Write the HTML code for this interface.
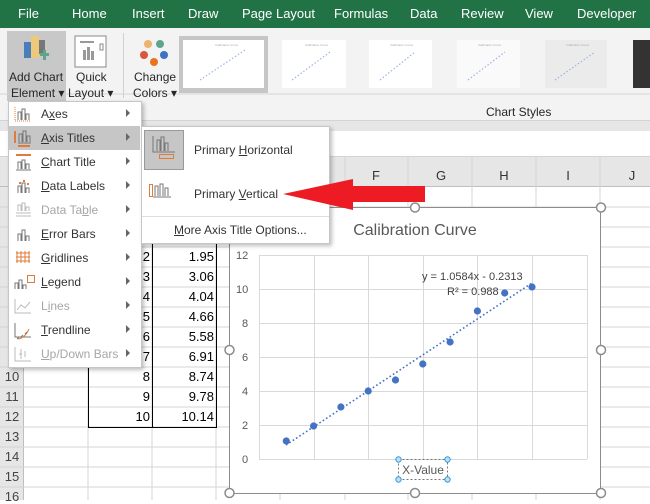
<!DOCTYPE html>
<html><head><meta charset="utf-8"><style>
*{margin:0;padding:0;box-sizing:border-box}
body{width:650px;height:500px;overflow:hidden;position:relative;background:#fff;font-family:"Liberation Sans",sans-serif;color:#262626}
.a{position:absolute;white-space:nowrap}
.tab{position:absolute;top:6px;color:#fff;font-size:13px}
.mi{position:absolute;left:41px;font-size:12px;color:#333}
.dis{color:#a6a6a6}
.arr{position:absolute;left:126px;width:0;height:0;border-left:4px solid #666;border-top:4px solid transparent;border-bottom:4px solid transparent}
.rh{position:absolute;left:0;width:24px;font-size:13px;color:#444;text-align:center}
.num{position:absolute;font-size:13px;text-align:right;color:#000}
.ch{position:absolute;top:168px;font-size:13px;color:#333;text-align:center;width:20px}
</style></head><body>
<div class="a" style="left:0;top:0;width:650px;height:28px;background:#217346"></div>
<div class="tab" style="left:18px">File</div>
<div class="tab" style="left:72px">Home</div>
<div class="tab" style="left:132px">Insert</div>
<div class="tab" style="left:188px">Draw</div>
<div class="tab" style="left:242px">Page Layout</div>
<div class="tab" style="left:334px">Formulas</div>
<div class="tab" style="left:410px">Data</div>
<div class="tab" style="left:461px">Review</div>
<div class="tab" style="left:525px">View</div>
<div class="tab" style="left:577px">Developer</div>
<div class="a" style="left:0;top:28px;width:650px;height:93px;background:#f3f3f3;border-bottom:1px solid #d4d4d4"></div>
<div class="a" style="left:7px;top:31px;width:59px;height:70px;background:#c8c8c8"></div>
<div class="a" style="left:123px;top:33px;width:1px;height:65px;background:#d0d0d0"></div>
<svg class="a" style="left:0;top:28px" width="650" height="93">
<rect x="24" y="14" width="7" height="16" fill="#4a7ebb"/><rect x="31" y="8" width="8" height="22" fill="#efc97a"/><rect x="39" y="12" width="6" height="14" fill="#777"/>
<rect x="43" y="22" width="3" height="10" fill="#5fa58e"/><rect x="40" y="25" width="9" height="3" fill="#5fa58e"/>
<rect x="75" y="8" width="31" height="31" fill="#fff" stroke="#888"/><rect x="80" y="13" width="14" height="2" fill="#999"/><rect x="83" y="22" width="3" height="10" fill="#999"/><rect x="87" y="19" width="3" height="13" fill="#999"/><rect x="91" y="23" width="3" height="9" fill="#999"/><rect x="100" y="16" width="3" height="6" fill="none" stroke="#888"/>
<circle cx="148" cy="16" r="4" fill="#efb36b"/><circle cx="160" cy="16" r="4" fill="#5fa58e"/><circle cx="144" cy="27" r="4" fill="#d9583b"/><circle cx="164" cy="27" r="4" fill="#3e72c2"/><circle cx="154" cy="34" r="4" fill="#e8741f"/>
<rect x="179" y="8" width="89" height="57" fill="#c6c6c6"/><rect x="183" y="12" width="81" height="48" fill="#fff"/>
<rect x="282" y="12" width="64" height="48" fill="#fff"/><rect x="369" y="12" width="63" height="48" fill="#fff"/><rect x="457" y="12" width="63" height="48" fill="#fafafa"/><rect x="545" y="12" width="62" height="48" fill="#ebebeb"/><rect x="633" y="12" width="17" height="48" fill="#333"/>
<g fill="#aaa" font-size="3" font-family="Liberation Sans"><text x="215" y="18">Calibration Curve</text><text x="305" y="18">Calibration Curve</text><text x="390" y="18">Calibration Curve</text><text x="478" y="18">Calibration Curve</text><text x="566" y="18">Calibration Curve</text></g>
<g stroke="#9fb4e0" stroke-width="1.2" stroke-dasharray="1.5,2"><line x1="200" y1="52" x2="245" y2="22"/><line x1="292" y1="52" x2="330" y2="24"/><line x1="380" y1="52" x2="415" y2="24"/><line x1="468" y1="52" x2="505" y2="24"/><line x1="555" y1="52" x2="595" y2="24"/></g>
<line x1="0" y1="66" x2="650" y2="66" stroke="#d4d4d4"/>
</svg>
<div class="a" style="left:9px;top:70px;font-size:12px">Add Chart</div>
<div class="a" style="left:11px;top:86px;font-size:12px">Element ▾</div>
<div class="a" style="left:76px;top:70px;font-size:12px">Quick</div>
<div class="a" style="left:68px;top:86px;font-size:12px">Layout ▾</div>
<div class="a" style="left:134px;top:70px;font-size:12px">Change</div>
<div class="a" style="left:133px;top:86px;font-size:12px">Colors ▾</div>
<div class="a" style="left:486px;top:105px;font-size:12px">Chart Styles</div>
<div class="a" style="left:0;top:121px;width:650px;height:10px;background:#e6e6e6"></div>
<div class="a" style="left:0;top:131px;width:650px;height:26px;background:#fff;border-bottom:1px solid #d4d4d4"></div>
<div class="a" style="left:0;top:157px;width:650px;height:30px;background:#e6e6e6;border-bottom:1px solid #bfbfbf"></div>
<div class="a" style="left:0;top:187px;width:24px;height:313px;background:#e6e6e6;border-right:1px solid #bfbfbf"></div>
<svg class="a" style="left:0;top:157px" width="650" height="343">
<g stroke="#d4d4d4"><line x1="88" y1="0" x2="88" y2="343"/><line x1="152" y1="0" x2="152" y2="343"/><line x1="216" y1="0" x2="216" y2="343"/><line x1="280" y1="0" x2="280" y2="343"/><line x1="345" y1="0" x2="345" y2="343"/><line x1="408" y1="0" x2="408" y2="343"/><line x1="472" y1="0" x2="472" y2="343"/><line x1="536" y1="0" x2="536" y2="343"/><line x1="600" y1="0" x2="600" y2="343"/>
<line x1="0" y1="50" x2="650" y2="50"/><line x1="0" y1="70" x2="650" y2="70"/><line x1="0" y1="90" x2="650" y2="90"/><line x1="0" y1="110" x2="650" y2="110"/><line x1="0" y1="130" x2="650" y2="130"/><line x1="0" y1="150" x2="650" y2="150"/><line x1="0" y1="170" x2="650" y2="170"/><line x1="0" y1="190" x2="650" y2="190"/><line x1="0" y1="210" x2="650" y2="210"/><line x1="0" y1="230" x2="650" y2="230"/><line x1="0" y1="250" x2="650" y2="250"/><line x1="0" y1="270" x2="650" y2="270"/><line x1="0" y1="290" x2="650" y2="290"/><line x1="0" y1="310" x2="650" y2="310"/><line x1="0" y1="330" x2="650" y2="330"/></g>
<g stroke="#000"><line x1="88.5" y1="70" x2="88.5" y2="270"/><line x1="152.5" y1="70" x2="152.5" y2="270"/><line x1="216.5" y1="70" x2="216.5" y2="270"/><line x1="88" y1="270.5" x2="217" y2="270.5"/></g>
</svg>
<div class="ch" style="left:366px">F</div><div class="ch" style="left:431px">G</div><div class="ch" style="left:494px">H</div><div class="ch" style="left:558px">I</div><div class="ch" style="left:622px">J</div>
<div class="rh" style="top:369px">10</div><div class="rh" style="top:389px">11</div><div class="rh" style="top:409px">12</div><div class="rh" style="top:429px">13</div><div class="rh" style="top:449px">14</div><div class="rh" style="top:469px">15</div><div class="rh" style="top:489px">16</div>
<div class="num" style="left:120px;width:30px;top:249px">2</div><div class="num" style="left:160px;width:54px;top:249px">1.95</div>
<div class="num" style="left:120px;width:30px;top:269px">3</div><div class="num" style="left:160px;width:54px;top:269px">3.06</div>
<div class="num" style="left:120px;width:30px;top:289px">4</div><div class="num" style="left:160px;width:54px;top:289px">4.04</div>
<div class="num" style="left:120px;width:30px;top:309px">5</div><div class="num" style="left:160px;width:54px;top:309px">4.66</div>
<div class="num" style="left:120px;width:30px;top:329px">6</div><div class="num" style="left:160px;width:54px;top:329px">5.58</div>
<div class="num" style="left:120px;width:30px;top:349px">7</div><div class="num" style="left:160px;width:54px;top:349px">6.91</div>
<div class="num" style="left:120px;width:30px;top:369px">8</div><div class="num" style="left:160px;width:54px;top:369px">8.74</div>
<div class="num" style="left:120px;width:30px;top:389px">9</div><div class="num" style="left:160px;width:54px;top:389px">9.78</div>
<div class="num" style="left:120px;width:30px;top:409px">10</div><div class="num" style="left:160px;width:54px;top:409px">10.14</div>
<svg class="a" style="left:0;top:0" width="650" height="500">
<rect x="229.5" y="207.5" width="371" height="286" fill="#fff" stroke="#8c8c8c"/>
<g stroke="#d9d9d9"><line x1="259" y1="255.5" x2="587" y2="255.5"/><line x1="259" y1="289.5" x2="587" y2="289.5"/><line x1="259" y1="323.5" x2="587" y2="323.5"/><line x1="259" y1="357.5" x2="587" y2="357.5"/><line x1="259" y1="391.5" x2="587" y2="391.5"/><line x1="259" y1="425.5" x2="587" y2="425.5"/><line x1="259" y1="459.5" x2="587" y2="459.5"/>
<line x1="259.5" y1="255" x2="259.5" y2="459"/><line x1="314.5" y1="255" x2="314.5" y2="459"/><line x1="368.5" y1="255" x2="368.5" y2="459"/><line x1="423.5" y1="255" x2="423.5" y2="459"/><line x1="477.5" y1="255" x2="477.5" y2="459"/><line x1="532.5" y1="255" x2="532.5" y2="459"/><line x1="587.5" y1="255" x2="587.5" y2="459"/></g>
<g font-size="11" fill="#595959" font-family="Liberation Sans"><text x="236" y="259">12</text><text x="236" y="293">10</text><text x="242" y="327">8</text><text x="242" y="361">6</text><text x="242" y="395">4</text><text x="242" y="429">2</text><text x="242" y="463">0</text></g>
<line x1="286" y1="445" x2="532" y2="283" stroke="#4472c4" stroke-width="1.6" stroke-dasharray="1.6,2.4"/>
<g fill="#4472c4"><circle cx="286.3" cy="441" r="3.6"/><circle cx="313.6" cy="426" r="3.6"/><circle cx="340.9" cy="407" r="3.6"/><circle cx="368.2" cy="391" r="3.6"/><circle cx="395.5" cy="380" r="3.6"/><circle cx="422.8" cy="364" r="3.6"/><circle cx="450.1" cy="342" r="3.6"/><circle cx="477.4" cy="311" r="3.6"/><circle cx="504.7" cy="293" r="3.6"/><circle cx="532" cy="287" r="3.6"/></g>
<text x="422" y="280" font-size="11" fill="#404040" font-family="Liberation Sans">y = 1.0584x - 0.2313</text>
<text x="447" y="295" font-size="11" fill="#404040" font-family="Liberation Sans">R² = 0.988</text>
<text x="415" y="235" font-size="16" fill="#595959" text-anchor="middle" font-family="Liberation Sans">Calibration Curve</text>
<rect x="398.5" y="459.5" width="49" height="20" fill="none" stroke="#777" stroke-dasharray="2,2"/>
<text x="423" y="474" font-size="12" fill="#595959" text-anchor="middle" font-family="Liberation Sans">X-Value</text>
<g fill="#bde0f7" stroke="#3a9be0"><circle cx="398.5" cy="459.5" r="2.7"/><circle cx="447.5" cy="459.5" r="2.7"/><circle cx="398.5" cy="479.5" r="2.7"/><circle cx="447.5" cy="479.5" r="2.7"/></g>
<g fill="#fff" stroke="#8c8c8c" stroke-width="1.5"><circle cx="415" cy="207.5" r="4.5"/><circle cx="601" cy="207.5" r="4.5"/><circle cx="229.5" cy="350" r="4.5"/><circle cx="601" cy="350" r="4.5"/><circle cx="229.5" cy="493" r="4.5"/><circle cx="415" cy="493" r="4.5"/><circle cx="601" cy="493" r="4.5"/></g>
</svg>
<div class="a" style="left:8px;top:101px;width:134px;height:267px;background:#fff;border:1px solid #c6c6c6;box-shadow:2px 2px 4px rgba(0,0,0,.25)"></div>
<div class="a" style="left:9px;top:126px;width:131px;height:24px;background:#c6c6c6"></div>
<svg class="a" style="left:8px;top:101px" width="30" height="267">
<!-- each item center y = 12+24n ; icon box x 5..25 -->
<g fill="none" stroke="#777">
 <g transform="translate(0,4)"><path d="M10 15V7h3v8M14 15V4h3v11M18 15v-6h3v6"/><path d="M7 2v14h16" stroke="#e07b39" stroke-dasharray="1,1"/></g>
 <g transform="translate(0,28)"><path d="M11 13V5h3v8M15 13V2h3v11M19 13v-6h3v6M10 14h13"/></g>
 <g transform="translate(0,52)"><path d="M10 16V9h3v7M14 16V7h3v9M18 16v-5h3v5M8 17h15"/></g>
 <g transform="translate(0,76)"><path d="M10 16V9h3v7M14 16V6h3v10M18 16v-5h3v5"/></g>
 <g transform="translate(0,100)" stroke="#bbb"><path d="M10 10V4h3v6M14 10V2h3v8M18 10V6h3v4M8 12h15M8 15h15"/></g>
 <g transform="translate(0,124)"><path d="M10 16V9h3v7M14 16V5h3v11M18 16v-5h3v5"/></g>
 <g transform="translate(0,172)"><path d="M7 16V10h3v6M11 16V7h3v9M15 16v-4h3v4"/></g>
 <g transform="translate(0,196)" stroke="#bbb"><path d="M7 2v14h16M9 13l4-5 4 3 5-6"/></g>
 <g transform="translate(0,220)"><path d="M7 2v14h16"/></g>
 <g transform="translate(0,244)" stroke="#bbb"><path d="M7 2v14h16M11 9h3M13 4v10M17 6v6"/></g>
</g>
<g fill="#e07b39">
 <rect x="6" y="30" width="2" height="12"/><rect x="10" y="44" width="12" height="2"/>
 <rect x="8" y="53" width="15" height="2"/>
 <rect x="15" y="79" width="2" height="2"/><rect x="11" y="81" width="2" height="2"/><rect x="19" y="82" width="2" height="2"/>
</g>
<g fill="none" stroke="#e07b39"><path d="M9 150v12M13 150v12M17 150v12M21 150v12M8 152h14M8 156h14M8 160h14"/><rect x="19.5" y="174.5" width="7" height="7" fill="#fff"/><path d="M10 238q7-1 11-10"/></g>
<path d="M9 238l2-2M13 236l2-2M17 233l2-2" stroke="#777"/>
</svg>
<div class="mi" style="top:107px">A<u>x</u>es</div>
<div class="mi" style="top:131px"><u>A</u>xis Titles</div>
<div class="mi" style="top:155px"><u>C</u>hart Title</div>
<div class="mi" style="top:179px"><u>D</u>ata Labels</div>
<div class="mi dis" style="top:203px">Data Ta<u>b</u>le</div>
<div class="mi" style="top:227px"><u>E</u>rror Bars</div>
<div class="mi" style="top:251px"><u>G</u>ridlines</div>
<div class="mi" style="top:275px"><u>L</u>egend</div>
<div class="mi dis" style="top:299px">L<u>i</u>nes</div>
<div class="mi" style="top:323px"><u>T</u>rendline</div>
<div class="mi dis" style="top:347px"><u>U</u>p/Down Bars</div>
<div class="arr" style="top:109px"></div><div class="arr" style="top:133px"></div><div class="arr" style="top:157px"></div><div class="arr" style="top:181px"></div><div class="arr" style="top:205px"></div><div class="arr" style="top:229px"></div><div class="arr" style="top:253px"></div><div class="arr" style="top:277px"></div><div class="arr" style="top:301px"></div><div class="arr" style="top:325px"></div><div class="arr" style="top:349px"></div>
<div class="a" style="left:141px;top:126px;width:189px;height:118px;background:#fff;border:1px solid #c6c6c6;box-shadow:2px 2px 4px rgba(0,0,0,.25)"></div>
<div class="a" style="left:144px;top:130px;width:40px;height:40px;background:#c6c6c6;border:1px solid #999"></div>
<svg class="a" style="left:141px;top:126px" width="60" height="90">
<g fill="none" stroke="#777"><path d="M12 10v16h22M16 25V14h3v11M20 25V11h3v14M24 25v-8h3v8"/>
<path d="M14 70V60h3v10M19 70V58h3v12M24 70v-8h3v8M12 71h18"/></g>
<rect x="18.5" y="28.5" width="14" height="4" fill="none" stroke="#e07b39"/>
<rect x="8.5" y="58.5" width="3" height="12" fill="none" stroke="#e07b39"/>
</svg>
<div class="a" style="left:194px;top:143px;font-size:12px;color:#333">Primary <u>H</u>orizontal</div>
<div class="a" style="left:194px;top:187px;font-size:12px;color:#333">Primary <u>V</u>ertical</div>
<div class="a" style="left:142px;top:216px;width:187px;height:1px;background:#ddd"></div>
<div class="a" style="left:174px;top:223px;font-size:12px;color:#333"><u>M</u>ore Axis Title Options...</div>
<svg class="a" style="left:0;top:0" width="650" height="500">
<path d="M283 194 L353 179 L353 186 L425 186 L425 202 L353 202 L353 210 Z" fill="#ed1c24"/>
</svg>
</body></html>
